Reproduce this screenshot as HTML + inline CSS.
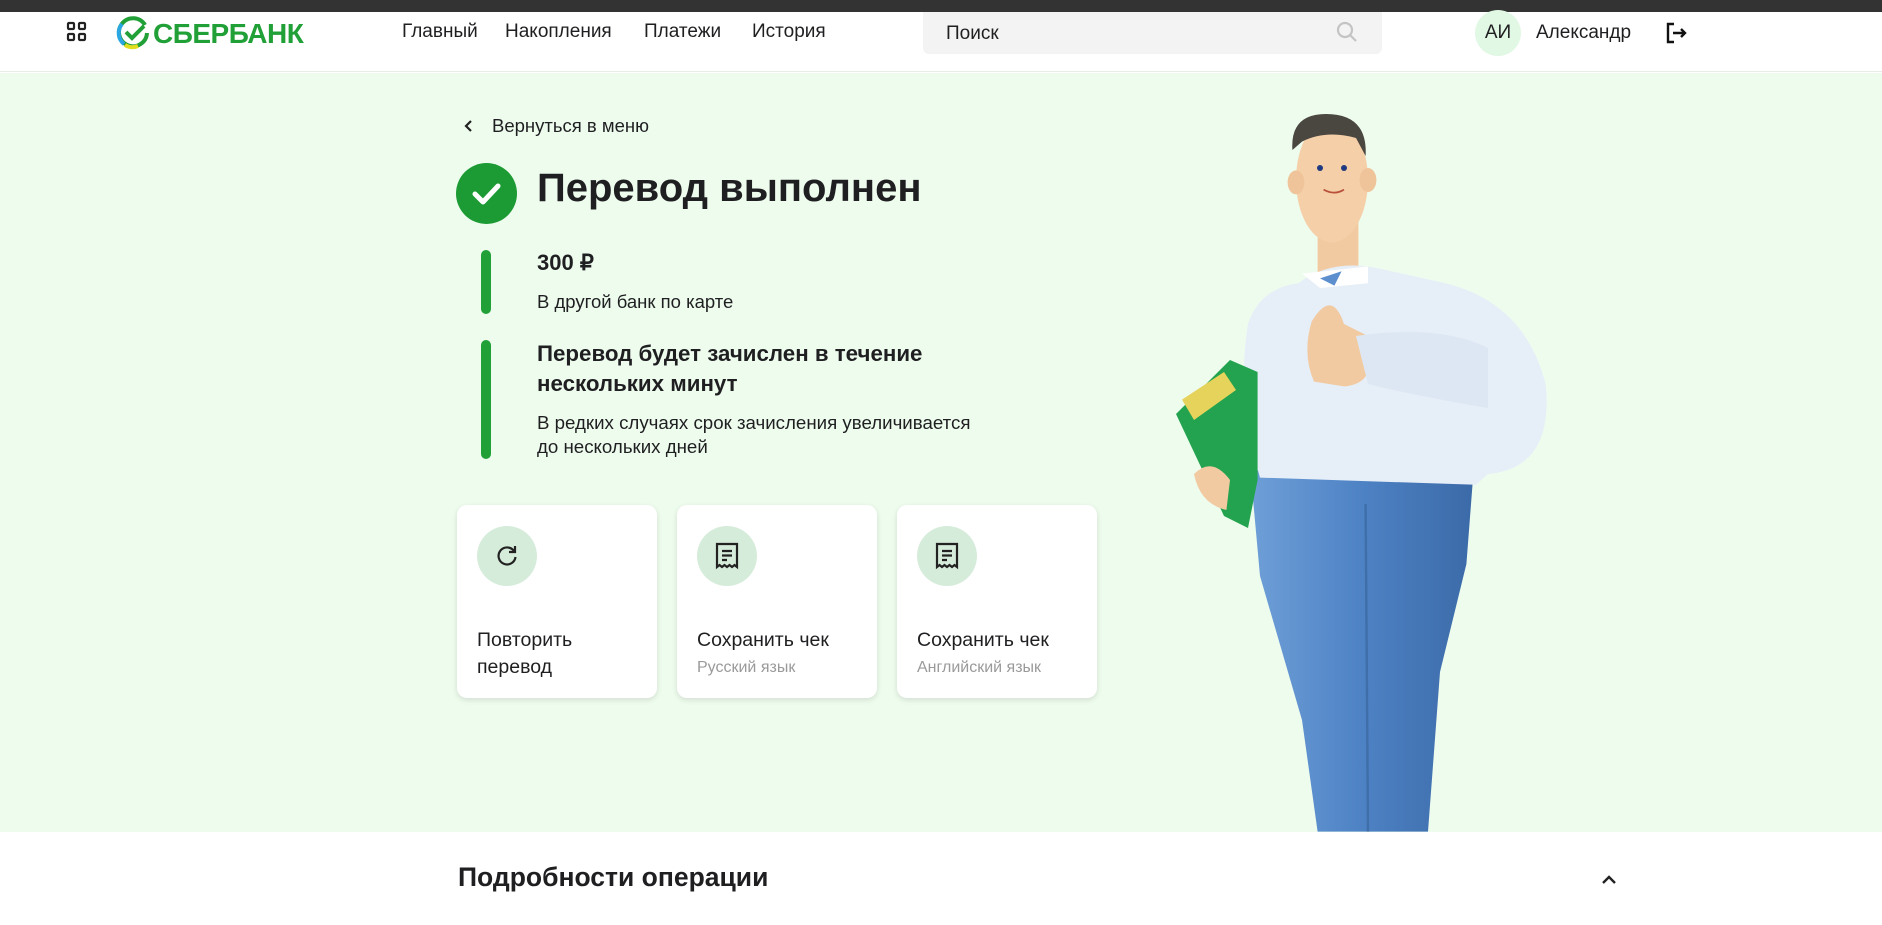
<!DOCTYPE html>
<html><head><meta charset="utf-8"><style>
*{margin:0;padding:0;box-sizing:border-box}
body{width:1882px;height:925px;overflow:hidden;background:#fff;font-family:"Liberation Sans","Noto Sans CJK SC",sans-serif;color:#1f1f22;position:relative}
.a{position:absolute;white-space:nowrap}
.top{left:0;top:0;width:1882px;height:12px;background:#333}
.hdr{left:0;top:12px;width:1882px;height:60px;background:#fff;border-bottom:1px solid #e8ede8}
.green{left:0;top:73px;width:1882px;height:759px;background:#eefcee}
.nav{top:21px;font-size:19px}
.search{left:923px;top:12px;width:459px;height:42px;background:#f3f3f3;border-radius:0 0 6px 6px}
.bar{width:10px;border-radius:5px;background:#21a038;left:481px}
.card{background:#fff;border-radius:10px;box-shadow:0 2px 6px rgba(0,0,0,.12);width:200px;height:193px;top:505px}
.ic{position:absolute;left:20px;top:21px;width:60px;height:60px;border-radius:50%;background:#d6ecda}
.ct{position:absolute;left:20px;top:122px;font-size:19.5px;line-height:27px;white-space:nowrap}
.cs{position:absolute;left:20px;top:154px;font-size:16px;color:#9a9a9a;white-space:nowrap}
</style></head><body>
<div class="a top"></div>
<div class="a hdr"></div>
<div class="a green"></div>
<svg class="a" style="left:66px;top:21px" width="22" height="22" viewBox="0 0 22 22" fill="none" stroke="#222" stroke-width="2.2"><rect x="2" y="2" width="6" height="6" rx="1"/><rect x="13" y="2" width="6" height="6" rx="1"/><rect x="2" y="13" width="6" height="6" rx="1"/><rect x="13" y="13" width="6" height="6" rx="1"/></svg>
<svg class="a" style="left:116px;top:16px" width="34" height="34" viewBox="0 0 34 34"><path d="M29 9 A14 14 0 1 0 31 17" fill="none" stroke="#21a038" stroke-width="4"/><path d="M6 8 A14 14 0 0 0 8 28" fill="none" stroke="#2aa7e0" stroke-width="4"/><path d="M9 29 A14 14 0 0 0 22 30" fill="none" stroke="#e2de1f" stroke-width="4"/><path d="M10 16 l6 6 l12 -12" fill="none" stroke="#21a038" stroke-width="4"/></svg>
<div class="a" style="left:153px;top:18px;font-size:28px;font-weight:700;color:#21a038;letter-spacing:-0.5px">СБЕРБАНК</div>
<div class="a nav" style="left:402px">Главный</div>
<div class="a nav" style="left:505px">Накопления</div>
<div class="a nav" style="left:644px">Платежи</div>
<div class="a nav" style="left:752px">История</div>
<div class="a search"></div>
<div class="a" style="left:946px;top:23px;font-size:19px">Поиск</div>
<svg class="a" style="left:1336px;top:21px" width="22" height="22" viewBox="0 0 22 22" fill="none" stroke="#c4c4c4" stroke-width="2.2"><circle cx="9" cy="9" r="7"/><path d="M14 14 l6 6"/></svg>
<div class="a" style="left:1475px;top:10px;width:46px;height:46px;border-radius:50%;background:#e1f8e4"></div>
<div class="a" style="left:1475px;top:22px;width:46px;text-align:center;font-size:19px">АИ</div>
<div class="a" style="left:1536px;top:22px;font-size:19px">Александр</div>
<svg class="a" style="left:1664px;top:21px" width="24" height="24" viewBox="0 0 24 24" fill="none" stroke="#111" stroke-width="2.4"><path d="M10 3 H4 V21 H10"/><path d="M9 12 H21 M17 8 l4 4 l-4 4"/></svg>

<svg class="a" style="left:462px;top:119px" width="14" height="14" viewBox="0 0 14 14" fill="none" stroke="#222" stroke-width="2.2"><path d="M9 2 L4 7 L9 12"/></svg>
<div class="a" style="left:492px;top:115px;font-size:18.5px">Вернуться в меню</div>
<div class="a" style="left:456px;top:163px;width:61px;height:61px;border-radius:50%;background:#1c9a33"></div>
<svg class="a" style="left:456px;top:163px" width="61" height="61" viewBox="0 0 61 61" fill="none" stroke="#fff" stroke-width="5" stroke-linecap="round" stroke-linejoin="round"><path d="M19 31 l8 8 l15 -16"/></svg>
<div class="a" style="left:537px;top:166px;font-size:40px;font-weight:600">Перевод выполнен</div>
<div class="a bar" style="top:250px;height:64px"></div>
<div class="a" style="left:537px;top:250px;font-size:22px;font-weight:600">300 ₽</div>
<div class="a" style="left:537px;top:291px;font-size:18.5px">В другой банк по карте</div>
<div class="a bar" style="top:340px;height:119px"></div>
<div class="a" style="left:537px;top:339px;font-size:22.3px;font-weight:600;line-height:30px">Перевод будет зачислен в течение<br>нескольких минут</div>
<div class="a" style="left:537px;top:411px;font-size:18.7px;line-height:24px">В редких случаях срок зачисления увеличивается<br>до нескольких дней</div>

<div class="a card" style="left:457px"><div class="ic"></div>
<svg style="position:absolute;left:37px;top:38px" width="26" height="26" viewBox="0 0 26 26" fill="none" stroke="#222" stroke-width="2.2"><path d="M20 8 A8.5 8.5 0 1 0 21.5 14"/><path d="M21 3 V9 H15"/></svg>
<div class="ct">Повторить<br>перевод</div></div>
<div class="a card" style="left:677px"><div class="ic"></div>
<svg style="position:absolute;left:37px;top:36px" width="26" height="30" viewBox="0 0 26 30" fill="none" stroke="#222" stroke-width="2.2"><path d="M3 3 H23 V26 l-2.5 -2 l-2.5 2 l-2.5 -2 l-2.5 2 l-2.5 -2 l-2.5 2 l-2.5 -2 l-2.5 2 Z"/><path d="M8 10 H18 M8 14.5 H18 M8 19 H13"/></svg>
<div class="ct">Сохранить чек</div><div class="cs">Русский язык</div></div>
<div class="a card" style="left:897px"><div class="ic"></div>
<svg style="position:absolute;left:37px;top:36px" width="26" height="30" viewBox="0 0 26 30" fill="none" stroke="#222" stroke-width="2.2"><path d="M3 3 H23 V26 l-2.5 -2 l-2.5 2 l-2.5 -2 l-2.5 2 l-2.5 -2 l-2.5 2 l-2.5 -2 l-2.5 2 Z"/><path d="M8 10 H18 M8 14.5 H18 M8 19 H13"/></svg>
<div class="ct">Сохранить чек</div><div class="cs">Английский язык</div></div>

<svg class="a" style="left:0;top:0" width="1882" height="925" viewBox="0 0 1568.33 770.83">
<defs><linearGradient id="p" x1="0" x2="1"><stop offset="0" stop-color="#6f9fd8"/><stop offset=".5" stop-color="#4d82c4"/><stop offset="1" stop-color="#3c6aa8"/></linearGradient></defs>
<path d="M1042 392 L1228 392 L1222 470 L1200 560 L1190 693 L1098 693 L1085 600 L1050 480 Z" fill="url(#p)"/>
<path d="M1138 420 L1140 693" stroke="#3f6ea9" stroke-width="2"/>
<rect x="1098" y="185" width="34" height="45" fill="#f2caa2"/>
<path d="M1082 236 Q1110 215 1150 224 L1200 235 Q1270 250 1288 320 Q1295 390 1240 395 L1230 404 L1050 398 Q1030 330 1040 270 Q1050 240 1082 236 Z" fill="#e6eef8"/>
<path d="M1085 228 L1140 222 L1140 236 L1100 240 Z" fill="#fff"/>
<path d="M1100 232 L1118 226 L1112 238 Z" fill="#5d8fcf"/>
<path d="M1093 268 Q1110 240 1120 270 L1140 280 Q1150 320 1120 322 L1095 318 Q1085 295 1093 268 Z" fill="#f2caa2"/>
<path d="M1130 280 Q1200 270 1240 290 L1240 340 Q1180 330 1140 320 Z" fill="#dde7f3"/>
<path d="M980 345 L1025 300 L1048 310 L1048 400 L1040 440 L1020 430 Z" fill="#23a34f"/>
<path d="M985 333 L1020 310 L1030 325 L995 350 Z" fill="#e5d35c"/>
<path d="M995 395 Q1010 380 1025 400 L1022 425 Q1000 420 995 395 Z" fill="#f2caa2"/>
<ellipse cx="1110" cy="150" rx="30" ry="52" fill="#f5cfa8"/>
<ellipse cx="1080" cy="152" rx="7" ry="10" fill="#f0c49a"/>
<ellipse cx="1140" cy="150" rx="7" ry="10" fill="#f0c49a"/>
<path d="M1077 125 Q1075 95 1105 95 Q1140 95 1138 130 L1130 115 Q1105 108 1085 118 Z" fill="#4a4640"/>
<circle cx="1100" cy="140" r="2.5" fill="#1f3a80"/><circle cx="1120" cy="140" r="2.5" fill="#1f3a80"/>
<path d="M1103 158 Q1112 163 1120 158" stroke="#b8503a" stroke-width="1.5" fill="none"/>
</svg>

<div class="a" style="left:458px;top:862px;font-size:26.5px;font-weight:600">Подробности операции</div>
<svg class="a" style="left:1601px;top:874px" width="16" height="12" viewBox="0 0 16 12" fill="none" stroke="#222" stroke-width="2.4"><path d="M2 9 L8 3 L14 9"/></svg>
</body></html>
